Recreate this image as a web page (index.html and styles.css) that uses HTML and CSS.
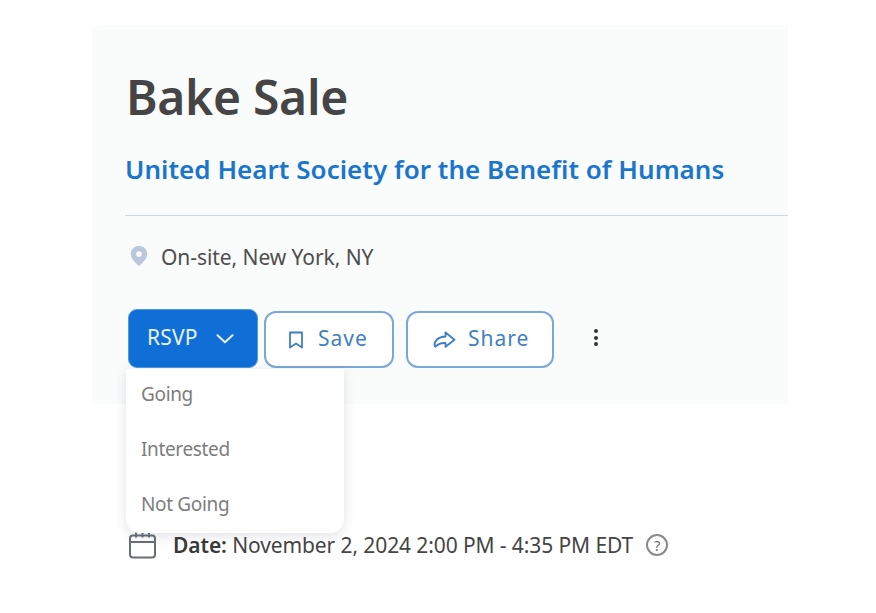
FILE: index.html
```html
<!DOCTYPE html>
<html lang="en">
<head>
<meta charset="utf-8">
<title>Bake Sale</title>
<link rel="stylesheet" href="styles.css">
</head>
<body>
<main class="page">
  <section class="card">
    <h1 class="title">Bake Sale</h1>
    <a class="org" href="#">United Heart Society for the Benefit of Humans</a>
    <hr class="rule">
    <div class="location">
      <svg class="pin" viewBox="0 0 18 20" width="18" height="20"><path fill="#b9c8da" fill-rule="evenodd" d="M9 0C4.300 0 .8 3.500.8 8c0 4.600 4.600 9 8.200 12 3.600-3 8.200-7.400 8.200-12C17.200 3.500 13.700 0 9 0zm0 5.300a2.800 2.800 0 1 1 0 5.600 2.800 2.800 0 0 1 0-5.600z"/></svg>
      <span>On-site, New York, NY</span>
    </div>
    <div class="actions">
      <div class="rsvp-wrap">
        <button class="btn-primary"><span class="label">RSVP</span>
          <svg viewBox="0 0 18 10" width="18" height="10"><path d="M1.500 1.200 9 8.300l7.500-7.100" fill="none" stroke="#e8f2fc" stroke-width="2" stroke-linecap="round" stroke-linejoin="round"/></svg>
        </button>
        <ul class="menu">
          <li>Going</li>
          <li>Interested</li>
          <li>Not Going</li>
        </ul>
      </div>
      <button class="btn-outline btn-save">
        <svg viewBox="0 0 16 20" width="16" height="20"><path d="M2 2.500h12v15L8 13.500l-6 4z" fill="none" stroke="#3f7fc2" stroke-width="1.800" stroke-linejoin="round"/></svg>
        <span class="label">Save</span>
      </button>
      <button class="btn-outline btn-share">
        <svg viewBox="0 0 24 20" width="24" height="20"><path d="M13.500 2.500 22.500 9.800l-9 7v-3.800c-4-.3-7 .5-10 3.700-1.800-1-.8-5 1.800-7.400 2.200-2 4.700-2.600 8.200-2.800z" fill="none" stroke="#3f7fc2" stroke-width="1.900" stroke-linejoin="round"/></svg>
        <span class="label">Share</span>
      </button>
      <button class="kebab" aria-label="More"><i></i><i></i><i></i></button>
    </div>
  </section>
  <div class="date-row">
    <svg class="cal" viewBox="0 0 28 28" width="28" height="28"><rect x="2" y="4.500" width="25" height="22" rx="3" fill="none" stroke="#66707a" stroke-width="2"/><path d="M2 11h25M8 1.500v5M14.500 1.500v5M21 1.500v5" fill="none" stroke="#66707a" stroke-width="2"/></svg>
    <p class="date"><strong>Date:</strong> November 2, 2024 2:00 PM - 4:35 PM EDT</p>
    <span class="help">?</span>
  </div>
</main>
</body>
</html>
```
FILE: styles.css
```css
* { box-sizing: border-box; }
html, body { margin: 0; padding: 0; background: #fff; }
body { font-family: "Noto Sans", "Open Sans", sans-serif; color: #444; overflow: hidden; }
.page { width: 876px; height: 613px; padding: 25px 88px 0 92px; }
.card { height: 379px; background: #fafbfb; border-radius: 8px 0 0 8px; padding: 39px 0 0 33px; }
.title { margin: 0 0 0 1px; font-size: 48px; line-height: 66px; font-weight: 600; color: #454545; letter-spacing: -.3px; }
.org { display: block; margin-top: 21px; font-size: 26px; line-height: 36px; font-weight: 600; color: #1a76cc; text-decoration: none; letter-spacing: .03px; }
.rule { margin: 28px 0 0; border: 0; border-top: 1px solid #c9d9e8; }
.location { display: flex; align-items: center; gap: 13px; margin-top: 27px; margin-left: 5px; height: 28px; font-size: 21px; color: #4e4e4e; letter-spacing: -.07px; }
.pin { margin-top: -3px; }
.actions { display: flex; align-items: flex-end; margin-top: 38px; margin-left: 3px; }
.rsvp-wrap { position: relative; }
.label { margin-top: -3px; }
button { font-family: inherit; }
.btn-primary { display: flex; align-items: center; justify-content: space-between; width: 130px; height: 59px; padding: 0 23px 0 18px; border: 1px solid #4b9be6; border-radius: 9px; background: #0f6fd6; color: #e8f2fc; font-size: 21px; letter-spacing: .2px; }
.btn-outline { display: flex; align-items: center; height: 57px; background: #fff; border: 2px solid #7aa8d4; border-radius: 12px; color: #3f7fc2; font-size: 21px; letter-spacing: 1px; }
.btn-save { width: 130px; margin-left: 6px; padding: 0 0 0 22px; gap: 14px; }
.btn-share { width: 148px; margin-left: 12px; padding: 0 0 0 24px; gap: 12px; }
.kebab { display: flex; flex-direction: column; align-items: center; gap: 2.500px; align-self: center; margin: -2px 0 0 32px; padding: 0; width: 20px; border: 0; background: none; }
.kebab i { width: 4px; height: 4px; border-radius: 50%; background: #333; }
.menu { position: absolute; left: -2px; top: 60px; z-index: 2; width: 218px; height: 164px; margin: 0; padding: 1px 0 0; list-style: none; background: #fff; border-radius: 0 0 14px 14px; box-shadow: 0 3px 12px rgba(40, 50, 70, .14); }
.menu li { height: 54.500px; padding-left: 15px; font-size: 19px; line-height: 49px; color: #7d7d7d; letter-spacing: -.35px; }
.menu li:last-child { padding-top: 1px; }
.date-row { display: flex; align-items: center; margin-top: 125px; margin-left: 36px; height: 32px; }
.cal { flex: none; }
.date { margin: 0 0 0 17px; font-size: 21px; color: #454545; letter-spacing: -.1px; white-space: nowrap; }
.date strong { font-weight: 600; color: #3a3a3a; }
.help { display: flex; align-items: center; justify-content: center; width: 22px; height: 22px; margin-left: 13px; border: 2px solid #8a8a8a; border-radius: 50%; font-size: 14px; color: #666; }
```
